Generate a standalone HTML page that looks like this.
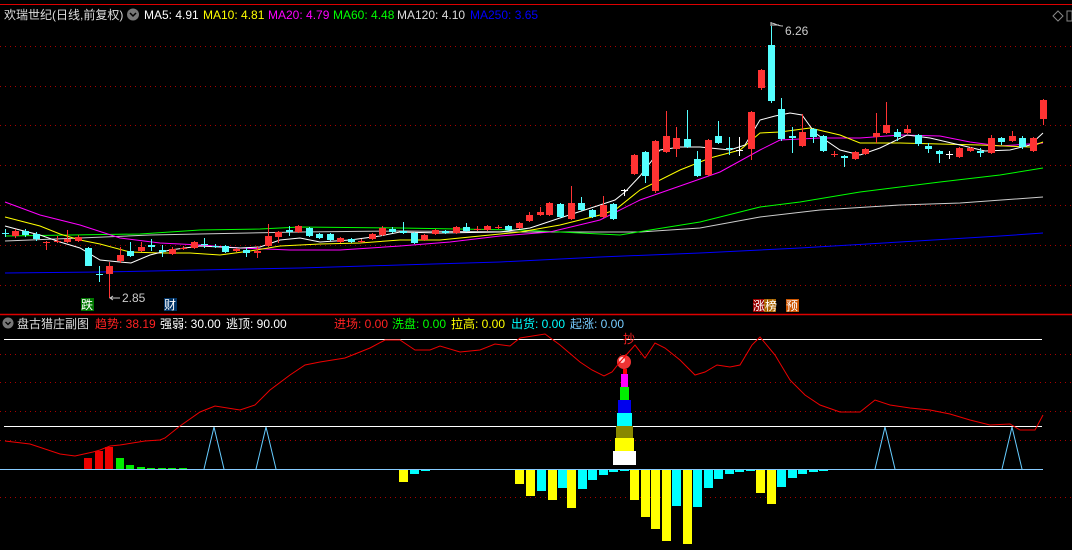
<!DOCTYPE html>
<html><head><meta charset="utf-8"><style>
html,body{margin:0;padding:0;background:#000;width:1072px;height:550px;overflow:hidden}
svg{display:block}
text{font-family:"Liberation Sans","Noto Sans CJK SC",sans-serif;font-size:12px}
</style></head><body>
<svg id="s" width="1072" height="550" xmlns="http://www.w3.org/2000/svg">
<rect width="1072" height="550" fill="#000"/>
<g id="grid"></g>
<line x1="0" y1="4.5" x2="1072" y2="4.5" stroke="#d00" stroke-width="1"/>
<line x1="0" y1="314.5" x2="1072" y2="314.5" stroke="#d00" stroke-width="1.5"/>
<g id="ma"></g>
<g id="candles"></g>
<g id="sub"></g>
<text x="4" y="19" fill="#ddd" font-size="13">欢瑞世纪(日线,前复权)</text>
<circle cx="133" cy="14.5" r="6" fill="#777"/><path d="M130 13l3 3 3-3" stroke="#000" fill="none" stroke-width="1.5"/>
<text x="144" y="19" fill="#fff">MA5: 4.91</text>
<text x="203" y="19" fill="#ff0">MA10: 4.81</text>
<text x="268" y="19" fill="#f0f">MA20: 4.79</text>
<text x="333" y="19" fill="#0f0">MA60: 4.48</text>
<text x="397" y="19" fill="#ddd">MA120: 4.10</text>
<text x="470" y="19" fill="#00f">MA250: 3.65</text>
<path d="M1053 16l5-5 5 5-5 5z" stroke="#888" fill="none"/>
<path d="M1067 11h5v10h-5z" stroke="#888" fill="none"/>
<text x="785" y="35" fill="#ccc">6.26</text>
<path d="M771 25h8M771 22v4M771 25l-0 0" stroke="#ccc"/>
<path d="M771 23c4 0 6 3 12 3" stroke="#ccc" fill="none"/>
<text x="122" y="302" fill="#ccc">2.85</text>
<path d="M110 298h10M113 296l-3 2 3 2" stroke="#ccc" fill="none"/>
<rect x="81" y="298" width="13" height="13" fill="#070"/><text x="81" y="309" fill="#fff" font-size="12">跌</text>
<rect x="164" y="298" width="13" height="13" fill="#036"/><text x="164" y="309" fill="#fff" font-size="12">财</text>
<rect x="753" y="299" width="11" height="13" fill="#900"/><rect x="764" y="299" width="12" height="13" fill="#a60"/>
<text x="753" y="310" fill="#fff" font-size="12">涨榜</text>
<rect x="786" y="299" width="13" height="13" fill="#c50"/><text x="786" y="310" fill="#fff" font-size="12">预</text>
<circle cx="8" cy="323" r="5.5" fill="#777"/><path d="M5.5 322l2.5 2.5 2.5-2.5" stroke="#000" fill="none" stroke-width="1.3"/>
<text x="17" y="328" fill="#ddd">盘古猎庄副图</text>
<text x="95" y="328" fill="#f22">趋势: 38.19</text>
<text x="160" y="328" fill="#fff">强弱: 30.00</text>
<text x="226" y="328" fill="#fff">逃顶: 90.00</text>
<text x="334" y="328" fill="#f22">进场: 0.00</text>
<text x="392" y="328" fill="#0f0">洗盘: 0.00</text>
<text x="451" y="328" fill="#ff0">拉高: 0.00</text>
<text x="511" y="328" fill="#0ff">出货: 0.00</text>
<text x="570" y="328" fill="#7cf">起涨: 0.00</text>
</svg>
<script>
var NS="http://www.w3.org/2000/svg";
function el(g,t,a){var e=document.createElementNS(NS,t);for(var k in a)e.setAttribute(k,a[k]);document.getElementById(g).appendChild(e);return e;}
// grid
[46,86,125,165,205,245,285,354,382,411,440,497].forEach(function(y){el("grid","line",{x1:0,x2:1072,y1:y+.5,y2:y+.5,stroke:"#a00","stroke-dasharray":"1 4"});});
function pl(g,pts,c,w){el(g,"polyline",{points:pts.map(function(p){return p.join(",")}).join(" "),fill:"none",stroke:c,"stroke-width":w||1});}
pl("ma",[[5,273],[100,272],[200,270],[300,268],[400,265],[500,262],[600,257],[700,253],[800,248],[900,242],[1000,236],[1043,233]],"#00f");
pl("ma",[[5,241],[80,238],[150,235],[300,232],[400,231],[520,232],[640,232],[700,228],[760,217],[820,210],[900,205],[960,203],[1043,197]],"#ccc");
pl("ma",[[5,236],[140,234],[170,232],[200,230],[260,229],[300,227],[400,228],[520,230],[620,235],[650,230],[700,222],[760,207],[800,202],[860,192],[940,182],[1000,175],[1043,168]],"#0f0");
pl("ma",[[5,202],[40,215],[80,225],[120,238],[160,243],[200,245],[240,248],[290,250],[340,250],[400,246],[450,242],[500,236],[550,232],[600,220],[640,200],[680,186],[720,172],[760,150],[780,140],[820,138],[860,138],[900,135],[940,136],[970,142],[1000,146],[1043,143]],"#f0f");
pl("ma",[[5,217],[40,226],[60,234],[80,240],[100,244],[130,252],[160,253],[190,253],[220,255],[250,251],[280,246],[320,244],[360,243],[400,240],[440,240],[480,236],[520,232],[560,225],[600,215],[615,210],[640,190],[680,170],[710,158],[740,150],[760,133],[780,132],[810,128],[840,135],[860,143],[900,143],[940,144],[980,145],[1030,147],[1043,142]],"#ff0");
pl("ma",[[5,226],[20,230],[40,235],[60,242],[80,248],[100,260],[120,262],[131,263],[150,255],[170,250],[200,246],[240,248],[260,247],[280,240],[300,238],[320,242],[350,240],[380,236],[400,232],[440,233],[500,232],[530,228],[560,218],[600,205],[615,200],[625,192],[640,176],[660,150],[680,147],[700,147],[730,150],[745,145],[760,120],[775,116],[790,113],[802,115],[815,133],[840,150],[860,155],[880,148],[907,135],[930,138],[960,145],[985,151],[1010,150],[1030,145],[1043,133]],"#fff");
// candles: x, color(r/c/w), top, bottom, high, low
var C=[[5,"c",233,233,229,237],[15,"r",231,236,229,238],[25,"c",231,235,229,237],[36,"c",234,239,232,241],[46,"r",242,243,241,250],[57,"r",241,241,236,243],[67,"r",239,242,230,243],[78,"r",237,241,235,242],[88,"c",248,266,247,266],[99,"c",274,274,266,282],[109,"r",266,274,262,298],[120,"r",255,261,247,263],[130,"c",251,256,242,257],[141,"r",247,251,242,252],[151,"c",245,247,239,251],[162,"c",250,252,245,257],[172,"r",249,254,247,255],[183,"r",248,248,246,250],[194,"r",242,248,241,249],[204,"c",244,244,238,248],[215,"c",246,247,244,248],[225,"c",246,252,245,253],[236,"r",249,251,248,252],[246,"c",250,253,248,257],[257,"r",251,253,246,258],[268,"r",236,246,224,247],[278,"r",232,237,231,243],[289,"c",230,232,226,236],[298,"r",226,232,225,233],[309,"c",228,236,227,237],[319,"c",234,238,233,239],[330,"c",234,240,233,241],[340,"r",238,242,237,243],[351,"c",239,242,238,243],[361,"r",241,241,239,243],[372,"r",234,239,233,240],[382,"r",228,235,226,236],[392,"c",229,232,227,233],[403,"c",231,233,222,234],[414,"c",233,243,232,244],[424,"r",235,240,234,241],[435,"r",230,234,229,235],[445,"c",231,233,230,234],[456,"r",227,233,226,234],[466,"c",227,231,223,232],[477,"r",229,229,226,231],[487,"r",226,230,225,231],[498,"r",227,227,225,229],[508,"c",226,230,225,231],[519,"r",223,228,222,229],[529,"r",215,221,212,222],[540,"r",212,215,207,216],[549,"r",203,215,202,216],[560,"c",204,217,203,218],[571,"r",203,219,186,220],[581,"c",203,210,197,211],[592,"c",210,217,209,218],[603,"r",205,217,196,218],[613,"c",204,219,203,220],[624,"w",190,190,189,196],[634,"r",155,174,154,175],[645,"c",152,176,151,183],[655,"r",141,191,140,193],[666,"r",136,152,111,153],[676,"r",138,149,127,157],[687,"c",139,147,110,148],[697,"c",159,176,151,177],[708,"r",140,175,139,176],[718,"c",136,143,121,144],[729,"c",148,149,137,155],[739,"w",150,150,137,156],[751,"r",112,149,111,160],[761,"r",70,88,69,90],[771,"c",45,101,26,103],[781,"c",109,139,98,141],[792,"c",136,138,127,153],[802,"r",132,146,114,147],[813,"c",129,137,128,143],[823,"c",136,151,135,152],[834,"r",154,154,151,157],[844,"c",156,158,155,167],[855,"r",152,159,151,160],[865,"r",149,154,148,155],[876,"r",133,137,113,143],[886,"r",125,133,102,134],[897,"c",132,137,129,141],[907,"r",129,133,125,134],[918,"c",135,144,134,146],[928,"c",146,149,143,153],[939,"c",151,154,150,163],[949,"w",154,154,151,159],[959,"r",148,157,147,158],[970,"r",148,151,147,152],[980,"c",151,153,148,157],[991,"r",138,153,135,154],[1001,"c",138,142,137,145],[1012,"r",136,141,131,142],[1022,"c",138,147,136,149],[1033,"r",138,151,137,152],[1043,"r",100,119,99,125]];
var col={r:"#f33",c:"#5ff",w:"#fff"};
C.forEach(function(k){var c=col[k[1]];el("candles","line",{x1:k[0]+.5,x2:k[0]+.5,y1:k[4],y2:k[5],stroke:c});
 var h=Math.max(1,k[3]-k[2]);el("candles","rect",{x:k[0]-3,y:k[2],width:7,height:h,fill:c});});
// sub panel
el("sub","line",{x1:4,x2:1042,y1:339.5,y2:339.5,stroke:"#fff"});
el("sub","line",{x1:4,x2:1042,y1:426.5,y2:426.5,stroke:"#fff"});
el("sub","line",{x1:0,x2:1043,y1:469.5,y2:469.5,stroke:"#8cf"});
// red/green bars
[[84,458,"#e00"],[95,451,"#e00"],[105,447,"#e00"],[116,458,"#0e0"],[126,465,"#0e0"],[137,467,"#0e0"],[147,468,"#0e0"],[158,468,"#0e0"],[168,468,"#0e0"],[179,468,"#0e0"]].forEach(function(b){el("sub","rect",{x:b[0],y:b[1],width:8,height:469-b[1],fill:b[2]});});
// spikes
[214,266,885,1012].forEach(function(x){pl("sub",[[x-10,469],[x,427],[x+10,469]],"#6cf");});
// down bars
var Y="#ff0",Cy="#0ff";
[[399,482,Y],[410,474,Cy],[421,471,Cy],[431,470,Cy],[515,484,Y],[526,496,Y],[537,491,Cy],[548,500,Y],[558,488,Cy],[567,508,Y],[578,489,Cy],[588,480,Cy],[599,475,Cy],[609,472,Cy],[620,471,Cy],[630,500,Y],[641,517,Y],[651,529,Y],[662,541,Y],[672,506,Cy],[683,544,Y],[693,507,Cy],[704,488,Cy],[714,479,Cy],[725,474,Cy],[735,472,Cy],[746,471,Cy],[756,493,Y],[767,504,Y],[777,487,Cy],[788,478,Cy],[798,474,Cy],[809,472,Cy],[819,471,Cy]].forEach(function(b){el("sub","rect",{x:b[0],y:470,width:9,height:b[1]-470,fill:b[2]});});
// tower
[[613,451,23,14,"#fff"],[615,438,19,13,"#ff0"],[616,426,17,12,"#880"],[617,413,15,13,"#0ff"],[618,400,13,13,"#00e"],[620,387,9,13,"#0e0"],[621,374,7,13,"#f0f"],[623,369,4,5,"#f00"]].forEach(function(t){el("sub","rect",{x:t[0],y:t[1],width:t[2],height:t[3],fill:t[4]});});
el("sub","circle",{cx:624,cy:362,r:7,fill:"#e33"});
el("sub","circle",{cx:622,cy:360,r:3,fill:"#fcc"});
pl("sub",[[5,441],[30,444],[60,454],[75,456],[93,452],[100,450],[110,446],[120,445],[145,441],[160,440],[165,438],[180,426],[200,412],[215,406],[240,410],[255,405],[270,390],[290,375],[305,365],[320,362],[345,358],[370,348],[385,340],[400,340],[415,350],[430,350],[440,346],[460,352],[480,350],[495,344],[510,346],[520,338],[545,334],[560,345],[580,362],[592,370],[604,376],[612,372],[620,362],[635,345],[645,358],[655,343],[665,348],[680,360],[695,375],[705,372],[717,365],[730,367],[740,365],[752,345],[760,337],[775,355],[790,380],[805,395],[820,405],[840,412],[860,412],[875,400],[890,405],[910,408],[930,410],[950,414],[970,420],[990,425],[1010,424],[1020,430],[1035,430],[1043,415]],"#e00");
var t=el("sub","text",{x:623,y:343,fill:"#f22","font-size":"12"});t.textContent="抄";
</script>
</body></html>
